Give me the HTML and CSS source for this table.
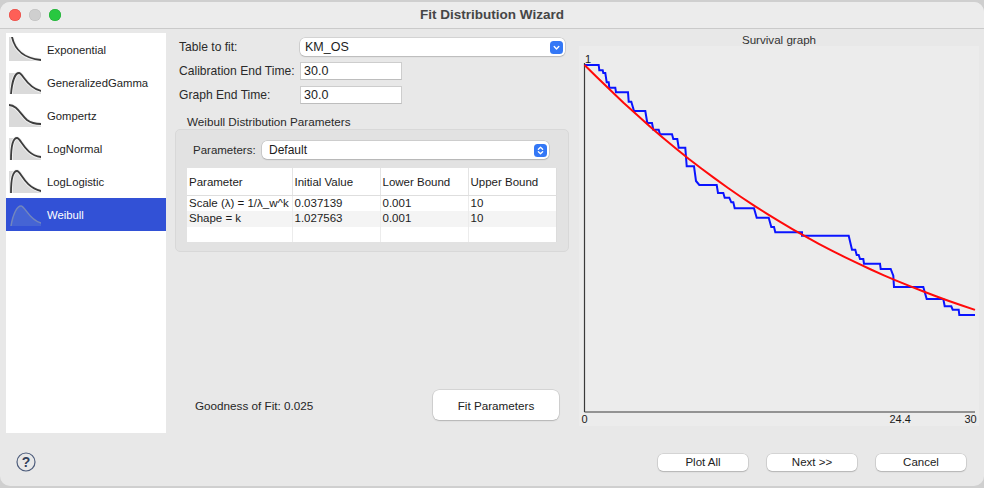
FILE: index.html
```
<!DOCTYPE html>
<html>
<head>
<meta charset="utf-8">
<title>Fit Distribution Wizard</title>
<link rel="stylesheet" href="styles.css">
</head>
<body>
<div class="window">
  <div class="titlebar">
    <div class="lights">
      <span class="light red"></span>
      <span class="light grey"></span>
      <span class="light green"></span>
    </div>
    <div class="title">Fit Distribution Wizard</div>
  </div>

  <div class="main">
    <ul class="dist-list">
      <li class="dist">
        <svg class="ico" viewBox="0 0 32 24"><path class="ico-fill" d="M0 0 H3 C6 13 14 21 32 23 V24 H0 Z"/><path class="ico-band" d="M3 0 C6 13 14 21 32 23"/><path class="ico-line" d="M3 0 C6 13 14 21 32 23"/></svg>
        <span>Exponential</span>
      </li>
      <li class="dist">
        <svg class="ico" viewBox="0 0 32 24"><path class="ico-fill" d="M0 3 H10 C14 3 17 17 32 21 V24 H0 Z"/><path class="ico-band" d="M2 24 C3 12 6 3 10 3 C14 3 17 17 32 21"/><path class="ico-line" d="M2 24 C3 12 6 3 10 3 C14 3 17 17 32 21"/></svg>
        <span>GeneralizedGamma</span>
      </li>
      <li class="dist">
        <svg class="ico" viewBox="0 0 32 24"><path class="ico-fill" d="M0 2 C8 2 12 12 18 17 C22 20 26 21 32 21 V24 H0 Z"/><path class="ico-band" d="M0 2 C8 2 12 12 18 17 C22 20 26 21 32 21"/><path class="ico-line" d="M0 2 C8 2 12 12 18 17 C22 20 26 21 32 21"/></svg>
        <span>Gompertz</span>
      </li>
      <li class="dist">
        <svg class="ico" viewBox="0 0 32 24"><path class="ico-fill" d="M0 2 H8 C12 2 16 19 32 21 V24 H0 Z"/><path class="ico-band" d="M2 24 C2 10 4 2 8 2 C12 2 16 19 32 21"/><path class="ico-line" d="M2 24 C2 10 4 2 8 2 C12 2 16 19 32 21"/></svg>
        <span>LogNormal</span>
      </li>
      <li class="dist">
        <svg class="ico" viewBox="0 0 32 24"><path class="ico-fill" d="M0 2 H8 C12 2 15 18 32 22 V24 H0 Z"/><path class="ico-band" d="M2 24 C2 9 4 2 8 2 C12 2 15 18 32 22"/><path class="ico-line" d="M2 24 C2 9 4 2 8 2 C12 2 15 18 32 22"/></svg>
        <span>LogLogistic</span>
      </li>
      <li class="dist sel">
        <svg class="ico" viewBox="0 0 32 24"><path class="ico-fill" d="M2 24 C4 12 8 4 12 4 C16 4 20 18 32 21 V24 Z"/><path class="ico-line" d="M2 24 C4 12 8 4 12 4 C16 4 20 18 32 21"/></svg>
        <span>Weibull</span>
      </li>
    </ul>

    <div class="form">
      <div class="fields">
        <label>Table to fit:</label>
        <div class="select wide">
          <span>KM_OS</span>
          <svg class="sel-btn" viewBox="0 0 13 13"><rect width="13" height="13" rx="3.5"/><path d="M4.2 5.6 L6.5 7.9 L8.8 5.6"/></svg>
        </div>
        <label>Calibration End Time:</label>
        <input class="field" type="text" value="30.0">
        <label>Graph End Time:</label>
        <input class="field" type="text" value="30.0">
      </div>

      <div class="group-title">Weibull Distribution Parameters</div>
      <div class="group">
        <div class="param-row">
          <label>Parameters:</label>
          <div class="select params">
            <span>Default</span>
            <svg class="sel-btn" viewBox="0 0 13 13"><rect width="13" height="13" rx="3.5"/><path d="M4.4 5.2 L6.5 3.3 L8.6 5.2 M4.4 7.8 L6.5 9.7 L8.6 7.8"/></svg>
          </div>
        </div>
        <table class="ptable">
          <colgroup><col class="c1"><col class="c2"><col class="c2"><col class="c2"></colgroup>
          <thead>
            <tr><th>Parameter</th><th>Initial Value</th><th>Lower Bound</th><th>Upper Bound</th></tr>
          </thead>
          <tbody>
            <tr><td>Scale (λ) = 1/λ_w^k</td><td>0.037139</td><td>0.001</td><td>10</td></tr>
            <tr class="alt"><td>Shape = k</td><td>1.027563</td><td>0.001</td><td>10</td></tr>
            <tr class="empty"><td></td><td></td><td></td><td></td></tr>
          </tbody>
        </table>
      </div>

      <div class="spacer"></div>

      <div class="fit-row">
        <span class="gof">Goodness of Fit: 0.025</span>
        <button class="btn big">Fit Parameters</button>
      </div>
    </div>

    <div class="graph-col">
      <div class="graph-title">Survival graph</div>
      <div class="graph">
        <svg class="plot" viewBox="579 47 400 380" width="400" height="380">
          <line class="axis" x1="584.5" y1="64" x2="584.5" y2="413"/>
          <line class="axis" x1="584.5" y1="413" x2="975" y2="413"/>
          <polyline class="km" points="584.7,66 598.7,66 599.3,71.3 602.7,71.3 603.3,74 605.3,74 606.7,83.3 608.7,83.3 609.3,88.7 615.3,88.7 616,93.3 628,93.3 628.7,102.7 631.3,102.7 634,112 645.3,112 647.3,124 652,124 653.3,130.7 658.7,130.7 660,135.3 672,135.3 673.3,140 677.3,140 678.7,148.7 685.3,148.7 686.7,167.3 694,167.3 696,182 699.3,186 716.7,186 718,194 723.3,194 724.7,198.7 729.3,198.7 731.3,203.3 733.3,203.3 734.7,209.3 754,209.3 756.7,218.7 768.7,218.7 771.3,228 774,228 775.3,233.3 802,233.3 802,236.7 848.7,236.7 852,250.7 855.3,250.7 856.7,256 858.7,256 860,260 863.3,260 864,264.7 880,264.7 880.7,270 890.7,270 893.3,276.7 894,288 923.3,288 926.7,300 943.3,300 944.7,307.3 951.3,307.3 952.7,310.7 958.7,310.7 959.3,316 975,316"/>
          <polyline class="fit" points="584.5,66 597.5,78.7 610.5,91.3 623.5,103.8 636.6,115.6 649.6,127.2 662.6,138.4 675.6,149.2 688.6,159.7 701.7,169.7 714.7,179.4 727.7,188.7 740.7,197.7 753.7,206.3 766.7,214.6 779.8,222.6 792.8,230.3 805.8,237.7 818.8,244.8 831.8,251.6 844.8,258.1 857.9,264.4 870.9,270.5 883.9,276.3 896.9,281.8 909.9,287.2 922.9,292.3 936,297.2 949,302 962,306.5 975,310.9"/>
          <text class="tick" x="585" y="63.5">1</text>
          <text class="tick" x="581.5" y="424">0</text>
          <text class="tick" x="889.5" y="424">24.4</text>
          <text class="tick" x="964.5" y="424">30</text>
        </svg>
      </div>
    </div>
  </div>

  <div class="footer">
    <svg class="help" viewBox="0 0 20 20"><circle cx="10" cy="10" r="9"/><text x="10" y="15">?</text></svg>
    <div class="actions">
      <button class="btn small">Plot All</button>
      <button class="btn small">Next &gt;&gt;</button>
      <button class="btn small">Cancel</button>
    </div>
  </div>
</div>
</body>
</html>
```

FILE: styles.css
```
* { box-sizing: border-box; }

body {
  margin: 0;
  width: 984px;
  height: 488px;
  overflow: hidden;
  background: #cfcfcf;
  font-family: "Liberation Sans", Arial, sans-serif;
  color: #262626;
}

.window {
  margin-top: 2px;
  height: 484px;
  background: #e8e8e8;
  border-radius: 10px;
  overflow: hidden;
  display: flex;
  flex-direction: column;
}

/* title bar */
.titlebar {
  position: relative;
  height: 27px;
  flex: none;
  background: #ececec;
  border-bottom: 1px solid #cacaca;
  display: flex;
  align-items: center;
}
.lights {
  display: flex;
  gap: 8px;
  padding-left: 9px;
}
.light {
  width: 12px;
  height: 12px;
  border-radius: 50%;
}
.light.red { background: #fe5f57; box-shadow: inset 0 0 0 0.5px #e14640; }
.light.grey { background: #cfcfcf; box-shadow: inset 0 0 0 0.5px #bdbdbd; }
.light.green { background: #28c840; box-shadow: inset 0 0 0 0.5px #1ea933; }
.title {
  position: absolute;
  left: 0;
  right: 0;
  top: 0;
  line-height: 26px;
  text-align: center;
  font-weight: bold;
  font-size: 13.5px;
  color: #464646;
}

/* main area */
.main {
  flex: none;
  height: 404px;
  display: flex;
  padding: 4px 5px 0 6px;
}

.dist-list {
  list-style: none;
  margin: 0;
  padding: 0;
  width: 160px;
  height: 400px;
  flex: none;
  background: #ffffff;
}
.dist {
  height: 33px;
  display: flex;
  align-items: center;
  gap: 6px;
  padding-left: 3px;
  font-size: 11.3px;
  color: #1e1e1e;
}
.dist.sel {
  background: #3251d6;
  color: #ffffff;
}
.ico {
  width: 32px;
  height: 24px;
  flex: none;
  margin-top: -2px;
}
.ico-fill { fill: #dadada; }
.ico-band { fill: none; stroke: #f2f2f2; stroke-width: 3.6; }
.ico-line { fill: none; stroke: #3d3d3d; stroke-width: 1.8; stroke-linecap: round; }
.dist.sel .ico-fill { fill: #4564d4; }
.dist.sel .ico-line { stroke: #7286bd; stroke-width: 1.5; }

/* form column */
.form {
  width: 394px;
  flex: none;
  margin-left: 9px;
  display: flex;
  flex-direction: column;
  padding: 5px 0 13px 0;
}
.fields {
  display: grid;
  grid-template-columns: 121px auto;
  row-gap: 6px;
  padding-left: 4px;
  align-items: center;
  justify-items: start;
}
.fields label {
  font-size: 12.1px;
  color: #2a2a2a;
  white-space: nowrap;
}
.select {
  height: 18px;
  background: #ffffff;
  border-radius: 5px;
  box-shadow: 0 0 0 0.5px rgba(0, 0, 0, 0.18), 0 1px 1.5px rgba(0, 0, 0, 0.12);
  display: flex;
  align-items: center;
  font-size: 12.5px;
  color: #1c1c1c;
}
.select.wide { width: 265px; padding-left: 5px; }
.select.params { width: 287px; padding-left: 7px; font-size: 12px; }
.sel-btn {
  width: 13px;
  height: 13px;
  margin-left: auto;
  margin-right: 2px;
}
.sel-btn rect { fill: #3478f6; }
.sel-btn path { fill: none; stroke: #ffffff; stroke-width: 1.4; stroke-linecap: round; stroke-linejoin: round; }

.field {
  width: 102px;
  height: 18px;
  margin: 0;
  padding: 0 0 0 3px;
  border: 1px solid #cdcdcd;
  border-bottom-color: #bdbdbd;
  background: #ffffff;
  font-family: "Liberation Sans", Arial, sans-serif;
  font-size: 12.5px;
  color: #1c1c1c;
  outline: none;
}

.group-title {
  margin-top: 11px;
  padding-left: 12px;
  font-size: 11.7px;
  line-height: 14px;
  color: #2a2a2a;
}
.group {
  height: 123px;
  background: #e2e2e2;
  border: 1px solid #d8d8d8;
  border-radius: 5px;
  padding: 11px 12px 10px 11px;
}
.param-row {
  display: flex;
  align-items: center;
  height: 18px;
}
.param-row label {
  width: 75px;
  padding-left: 6px;
  font-size: 11.5px;
  color: #2a2a2a;
}
.ptable {
  margin-top: 9px;
  width: 369px;
  border-collapse: collapse;
  table-layout: fixed;
  background: #ffffff;
  font-size: 11.5px;
  color: #1c1c1c;
}
.ptable .c1 { width: 105px; }
.ptable .c2 { width: 88px; }
.ptable th {
  height: 27px;
  padding: 2px 0 0 2px;
  text-align: left;
  font-weight: normal;
  border-right: 1px solid #e4e4e4;
  border-bottom: 1px solid #dedede;
  white-space: nowrap;
}
.ptable td {
  height: 15px;
  line-height: 15px;
  padding: 0 0 0 2px;
  border-right: 1px solid #ececec;
  white-space: nowrap;
  overflow: hidden;
}
.ptable tr.alt td { height: 16px; background: #f4f4f4; }
.ptable th:last-child, .ptable td:last-child { border-right: 1px solid #dcdcdc; }

.spacer { flex: 1; }

.fit-row {
  display: flex;
  align-items: center;
  justify-content: space-between;
  padding: 0 10px 0 20px;
}
.gof { font-size: 11.7px; color: #262626; }

.btn {
  font-family: "Liberation Sans", Arial, sans-serif;
  background: #ffffff;
  border: none;
  border-radius: 5px;
  box-shadow: 0 0 0 0.5px rgba(0, 0, 0, 0.16), 0 1px 1.5px rgba(0, 0, 0, 0.16);
  color: #222222;
  padding: 0;
}
.btn.big {
  width: 126px;
  height: 30px;
  border-radius: 6px;
  font-size: 11.7px;
}
.btn.small {
  width: 90px;
  height: 17px;
  font-size: 11.5px;
}

/* graph column */
.graph-col {
  width: 400px;
  flex: none;
  margin-left: 10px;
}
.graph-title {
  height: 13px;
  line-height: 13px;
  text-align: center;
  font-size: 11.6px;
  color: #333333;
}
.graph {
  height: 380px;
  background: #ececec;
}
.plot { display: block; }
.axis { stroke: #3a3a3a; stroke-width: 1.2; }
.km { fill: none; stroke: #0a14ff; stroke-width: 2; stroke-linejoin: miter; }
.fit { fill: none; stroke: #ff0a0a; stroke-width: 2; stroke-linejoin: round; }
.tick {
  font-family: "Liberation Sans", Arial, sans-serif;
  font-size: 11px;
  fill: #1a1a1a;
}

/* footer */
.footer {
  flex: 1;
  display: flex;
  align-items: center;
  padding: 5px 18px 0 16px;
}
.help {
  width: 20px;
  height: 20px;
}
.help circle { fill: none; stroke: #4e5d7c; stroke-width: 1.2; }
.help text {
  font-family: "Liberation Sans", Arial, sans-serif;
  font-size: 14px;
  font-weight: bold;
  fill: #34405a;
  text-anchor: middle;
}
.actions {
  margin-left: auto;
  display: flex;
  gap: 19px;
}
```
